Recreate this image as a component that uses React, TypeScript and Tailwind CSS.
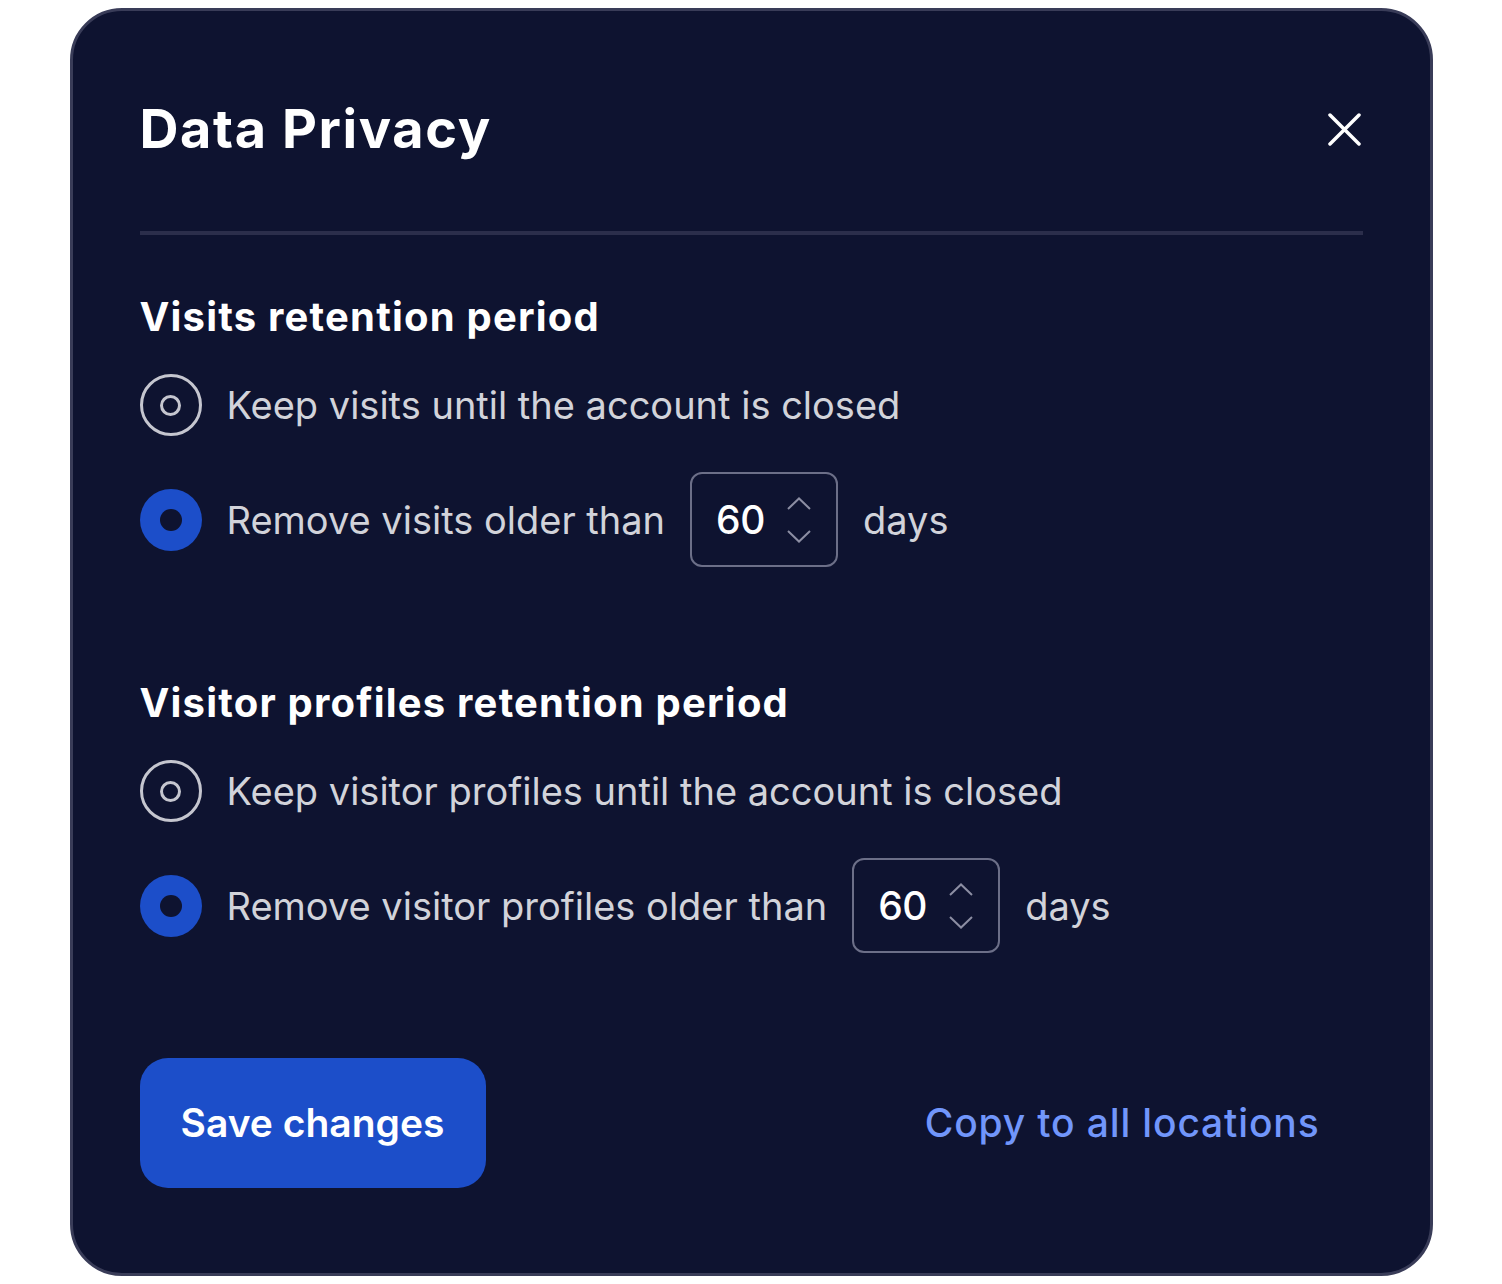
import React, { useState } from 'react';

type Option = { id: string; label: string; days?: boolean };

const font = { fontFamily: 'Inter, "Noto Sans", sans-serif' };

const Radio = ({ checked }: { checked: boolean }) =>
  checked ? (
    <span className="flex h-[62px] w-[62px] shrink-0 items-center justify-center rounded-full bg-[#1c4ec9]">
      <span className="h-[22px] w-[22px] rounded-full bg-[#0e1330]" />
    </span>
  ) : (
    <span className="flex h-[62px] w-[62px] shrink-0 items-center justify-center rounded-full border-[3px] border-[#c5c6cf]">
      <span className="h-[21px] w-[21px] rounded-full border-[3px] border-[#c5c6cf]" />
    </span>
  );

const DaysInput = ({ value }: { value: number }) => (
  <div className="flex h-[95px] w-[148px] items-center justify-between rounded-[12px] border-2 border-[#6c6f88] pl-[24px] pr-[25px]">
    <span className="text-[39px] leading-none font-medium tracking-[-0.5px] text-white">{value}</span>
    <div className="flex flex-col gap-[20px]">
      <svg width="24" height="13" viewBox="0 0 24 13" fill="none">
        <path d="M1 12 12 1.5 23 12" stroke="#8c8ea3" strokeWidth="2" />
      </svg>
      <svg width="24" height="13" viewBox="0 0 24 13" fill="none">
        <path d="M1 1 12 11.5 23 1" stroke="#8c8ea3" strokeWidth="2" />
      </svg>
    </div>
  </div>
);

const Section = ({ title, options, mt }: { title: string; options: Option[]; mt: string }) => {
  const [selected, setSelected] = useState(options[1].id);
  return (
    <section className={mt}>
      <h3 className="text-[40px] leading-[40px] font-bold tracking-[1.2px] text-white">{title}</h3>
      <div className="mt-[37px] flex flex-col gap-[36px]">
        {options.map(o => (
          <label
            key={o.id}
            onClick={() => setSelected(o.id)}
            className="flex min-h-[62px] cursor-pointer items-center gap-[25px] text-[38px] leading-none text-[#d2d3da]"
          >
            <Radio checked={selected === o.id} />
            {o.days ? (
              <span className="flex items-center gap-[25px]">
                <span>{o.label}</span>
                <DaysInput value={60} />
                <span>days</span>
              </span>
            ) : (
              <span>{o.label}</span>
            )}
          </label>
        ))}
      </div>
    </section>
  );
};

export default function App() {
  return (
    <div className="min-h-screen bg-white py-[8px]" style={font}>
      <div className="mx-auto flex h-[1268px] w-[1363px] flex-col rounded-[52px] border-[3px] border-[#393c58] bg-[#0e1330] px-[67px] pt-[92px] pb-[85px]">
        {/* header */}
        <div className="flex items-start justify-between">
          <h2 className="text-[54px] leading-[52px] font-bold tracking-[1.6px] text-white">Data Privacy</h2>
          <button className="mt-[10px] mr-[2px] text-white">
            <svg width="33" height="33" viewBox="0 0 33 33" fill="none">
              <path d="M2 2 31 31M31 2 2 31" stroke="white" strokeWidth="3.5" strokeLinecap="round" />
            </svg>
          </button>
        </div>
        <div className="mt-[76px] h-[4px] w-full bg-[#2b2e4b]" />

        <Section
          mt="mt-[62px]"
          title="Visits retention period"
          options={[
            { id: 'keep', label: 'Keep visits until the account is closed' },
            { id: 'remove', label: 'Remove visits older than', days: true },
          ]}
        />
        <Section
          mt="mt-[116px]"
          title="Visitor profiles retention period"
          options={[
            { id: 'keep', label: 'Keep visitor profiles until the account is closed' },
            { id: 'remove', label: 'Remove visitor profiles older than', days: true },
          ]}
        />

        {/* footer actions */}
        <div className="mt-auto flex items-center justify-between">
          <button className="flex h-[130px] w-[346px] items-center justify-center rounded-[28px] bg-[#1c4ec9] text-[39px] font-semibold text-white">
            Save changes
          </button>
          <button className="mr-[43px] text-[39px] font-medium tracking-[0.85px] text-[#7196fb]">Copy to all locations</button>
        </div>
      </div>
    </div>
  );
}
